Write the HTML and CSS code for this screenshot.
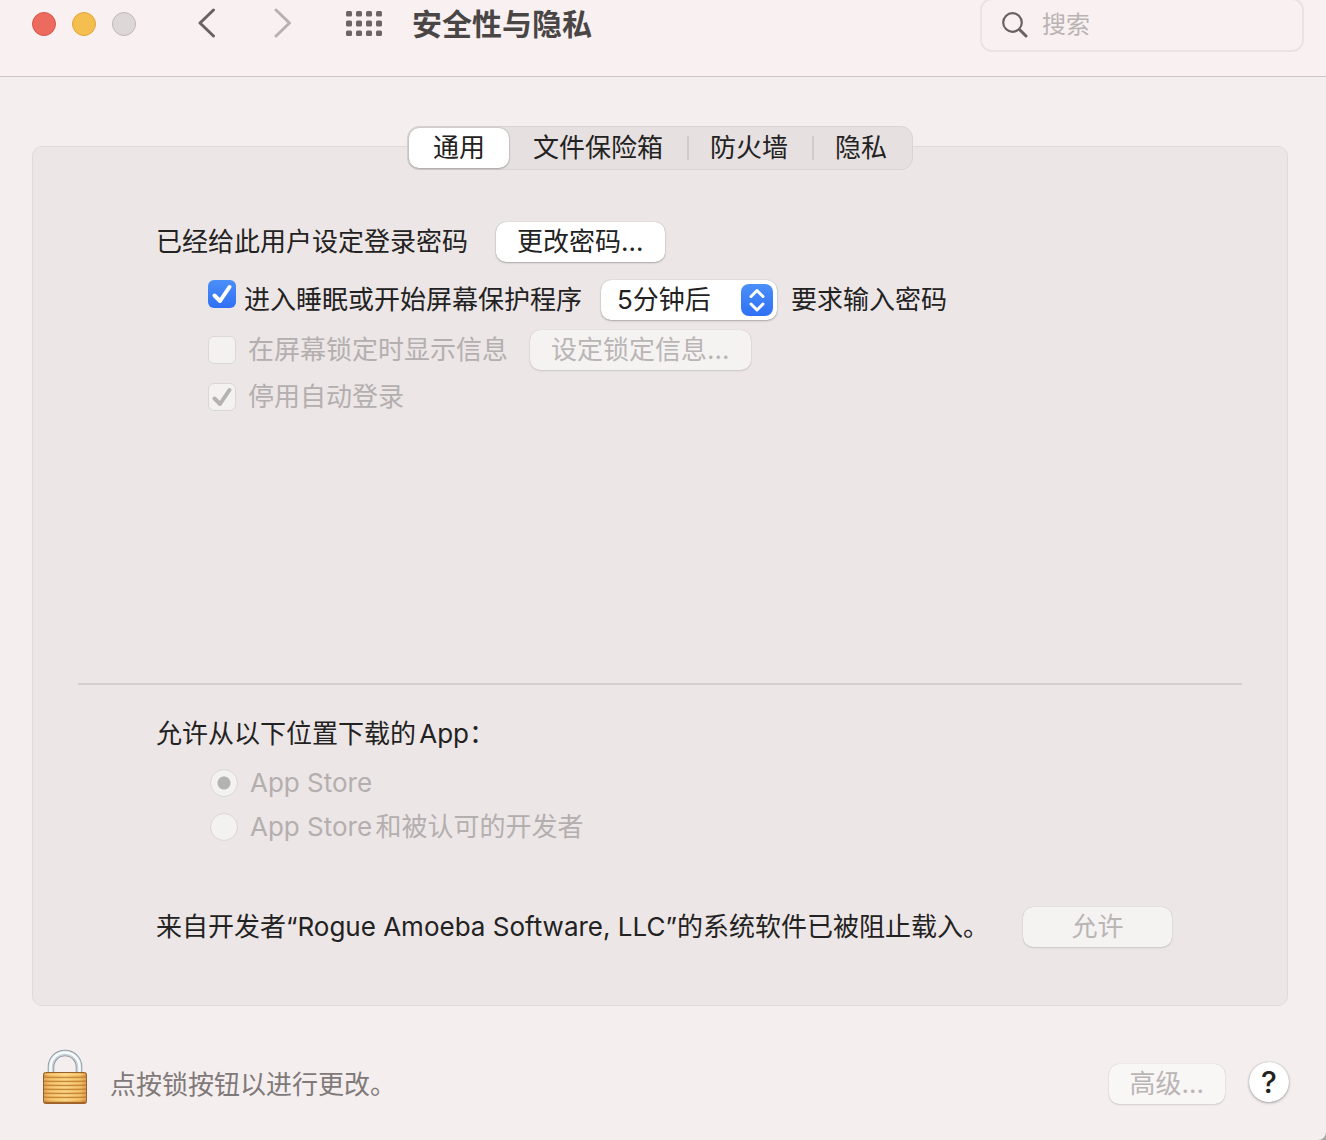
FILE: index.html
```html
<!DOCTYPE html>
<html lang="zh-CN">
<head>
  <meta charset="UTF-8" />
  <meta name="viewport" content="width=device-width, initial-scale=1.0"/>
  <title>安全性与隐私</title>
  <link rel="stylesheet" href="styles.css">
</head>
<body>
<div class="window">

  <header class="toolbar">
    <div class="lights">
      <button class="light light-close" type="button" aria-label="关闭"></button>
      <button class="light light-min" type="button" aria-label="最小化"></button>
      <button class="light light-off" type="button" aria-label="缩放" disabled></button>
    </div>
    <div class="history">
      <button class="icon-btn" type="button" aria-label="后退">
        <svg width="20" height="32" viewBox="0 0 20 32" fill="none" stroke="#686262" stroke-width="3" stroke-linecap="round" stroke-linejoin="round"><path d="M15.500 2 2 15l13.500 13"/></svg>
      </button>
      <button class="icon-btn" type="button" aria-label="前进" disabled>
        <svg width="20" height="32" viewBox="0 0 20 32" fill="none" stroke="#b9b1b1" stroke-width="3" stroke-linecap="round" stroke-linejoin="round"><path d="M4 2l13.500 13L4 28"/></svg>
      </button>
    </div>
    <button class="icon-btn show-all" type="button" aria-label="显示全部">
      <svg width="36" height="26" viewBox="0 0 36 26" fill="#6b6565">
        <rect x="0" y="0" width="6" height="5.500" rx="1.5"/><rect x="10" y="0" width="6" height="5.500" rx="1.5"/><rect x="20" y="0" width="6" height="5.500" rx="1.5"/><rect x="30" y="0" width="6" height="5.500" rx="1.5"/>
        <rect x="0" y="9.500" width="6" height="6" rx="1.5"/><rect x="10" y="9.500" width="6" height="6" rx="1.5"/><rect x="20" y="9.500" width="6" height="6" rx="1.5"/><rect x="30" y="9.500" width="6" height="6" rx="1.5"/>
        <rect x="0" y="19.500" width="6" height="5.500" rx="1.5"/><rect x="10" y="19.500" width="6" height="5.500" rx="1.5"/><rect x="20" y="19.500" width="6" height="5.500" rx="1.5"/><rect x="30" y="19.500" width="6" height="5.500" rx="1.5"/>
      </svg>
    </button>
    <h1 class="title">安全性与隐私</h1>
    <label class="search">
      <svg width="26" height="26" viewBox="0 0 26 26" fill="none" stroke="#686262" stroke-linecap="round"><circle cx="10.5" cy="10.5" r="9.3" stroke-width="2.2"/><path d="M17.5 17.5l6.5 6.5" stroke-width="3"/></svg>
      <input type="search" placeholder="搜索" aria-label="搜索">
    </label>
  </header>

  <main class="content">
    <nav class="tabs" role="tablist">
      <button class="tab active" type="button" role="tab" aria-selected="true">通用</button>
      <button class="tab" type="button" role="tab">文件保险箱</button>
      <button class="tab divided" type="button" role="tab">防火墙</button>
      <button class="tab divided" type="button" role="tab">隐私</button>
    </nav>

    <div class="panel">
      <section class="login">
        <div class="row password-row">
          <span>已经给此用户设定登录密码</span>
          <button class="btn" type="button">更改密码…</button>
        </div>
        <div class="row option delay-row">
          <input class="check" type="checkbox" id="require" checked>
          <label for="require">进入睡眠或开始屏幕保护程序</label>
          <div class="popup">
            <select id="delay" aria-label="要求输入密码的时间">
              <option>5分钟后</option>
            </select>
            <span class="popup-arrows">
              <svg width="32" height="32" viewBox="0 0 32 32" fill="none" stroke="#fff" stroke-width="3" stroke-linecap="round" stroke-linejoin="round"><path d="M10 12.5l6-6 6 6M10 20l6 6 6-6"/></svg>
            </span>
          </div>
          <label for="delay">要求输入密码</label>
        </div>
        <div class="row option message-row">
          <input class="check" type="checkbox" id="message" disabled>
          <label for="message">在屏幕锁定时显示信息</label>
          <button class="btn" type="button" disabled>设定锁定信息…</button>
        </div>
        <div class="row option">
          <input class="check" type="checkbox" id="autologin" checked disabled>
          <label for="autologin">停用自动登录</label>
        </div>
      </section>

      <section class="downloads">
        <h2>允许从以下位置下载的App：</h2>
        <div class="row source">
          <input class="radio" type="radio" name="source" id="store" checked disabled>
          <label for="store">App Store</label>
        </div>
        <div class="row source">
          <input class="radio" type="radio" name="source" id="developers" disabled>
          <label for="developers">App Store和被认可的开发者</label>
        </div>
        <div class="row blocked">
          <span>来自开发者“Rogue Amoeba Software, LLC”的系统软件已被阻止载入。</span>
          <button class="btn allow" type="button" disabled>允许</button>
        </div>
      </section>
    </div>
  </main>

  <footer class="footer">
    <button class="icon-btn lock" type="button" aria-label="锁">
      <svg width="46" height="56" viewBox="0 0 46 56">
        <defs>
          <linearGradient id="brass" x1="0" y1="0" x2="1" y2="0">
            <stop offset="0" stop-color="#d2903b"/><stop offset=".15" stop-color="#f0b95c"/><stop offset=".5" stop-color="#fbd480"/><stop offset=".85" stop-color="#efb657"/><stop offset="1" stop-color="#c98433"/>
          </linearGradient>
        </defs>
        <path d="M9 26V18a14 14 0 0 1 28 0V26" fill="none" stroke="#849097" stroke-width="6.500"/>
        <path d="M9 26V18a14 14 0 0 1 28 0V26" fill="none" stroke="#c9d2d8" stroke-width="5"/>
        <path d="M8.500 26V18a14.500 14.500 0 0 1 29 0V26" fill="none" stroke="#f7fafb" stroke-width="2.500"/>
        <rect x="1.500" y="23.500" width="43" height="31" rx="2" fill="url(#brass)" stroke="#98602a"/>
        <path d="M2 28.500h42M2 32.500h42M2 36.500h42M2 40.500h42M2 44.500h42M2 48.500h42" stroke="#c8863a" stroke-width="1.300"/>
        <path d="M3 25.500h40M2 30h42M2 34h42M2 38h42M2 42h42M2 46h42M2 50h42" stroke="#ffe09a" opacity=".6"/>
        <path d="M2 53.500h42" stroke="#a9682b" stroke-width="1.500"/>
      </svg>
    </button>
    <p class="lock-text">点按锁按钮以进行更改。</p>
    <button class="btn" type="button" disabled>高级…</button>
    <button class="help" type="button" aria-label="帮助">?</button>
  </footer>

</div>
</body>
</html>
```
FILE: styles.css
```css
* {
  box-sizing: border-box;
}

body {
  margin: 0;
  background: #aaa5a5;
  color: #232222;
  font-family: Inter, "Noto Sans CJK SC", sans-serif;
  font-size: 26px;
  line-height: 34px;
  text-autospace: normal;
}

button, input, select {
  font: inherit;
  color: inherit;
  text-autospace: normal;
  margin: 0;
}

.window {
  display: flex;
  flex-direction: column;
  min-height: 100vh;
  background: #f4eeee;
  border-bottom-right-radius: 8px;
}

/* toolbar */
.toolbar {
  display: flex;
  align-items: center;
  padding: 0 22px 28px 32px;
  background: #f9f1f1;
  border-bottom: 1px solid #cbc5c5;
}

.lights {
  display: flex;
  gap: 16px;
}

.light {
  width: 24px;
  height: 24px;
  padding: 0;
  border: 1px solid;
  border-radius: 50%;
}

.light-close {
  background: #ed6a5e;
  border-color: #d5584d;
}

.light-min {
  background: #f5bf4f;
  border-color: #dba63c;
}

.light-off {
  background: #ded7d8;
  border-color: #bfb8b8;
}

.icon-btn {
  display: flex;
  padding: 0;
  border: none;
  background: none;
}

.history {
  display: flex;
  gap: 54px;
  margin-left: 62px;
}

.show-all {
  margin-left: 54px;
}

.title {
  margin: 0 auto 0 30px;
  font-size: 30px;
  line-height: 36px;
  font-weight: 700;
  color: #4a4646;
}

.search {
  display: flex;
  align-items: center;
  gap: 14px;
  flex: 0 1 324px;
  min-width: 0;
  height: 54px;
  margin: -2px 0 -4px;
  padding: 0 20px;
  border: 2px solid #ebe3e3;
  border-radius: 12px;
}

.search svg {
  flex: none;
}

.search input {
  flex: 1;
  min-width: 0;
  padding: 0;
  border: none;
  outline: none;
  background: none;
  font-size: 24px;
}

.search input::placeholder {
  color: #bab3b3;
}

/* tabs sit across the top edge of the panel */
.content {
  display: flex;
  flex-direction: column;
  flex: 1;
  padding: 49px 38px 0 32px;
}

.tabs {
  display: flex;
  align-self: center;
  z-index: 1;
  height: 44px;
  margin-bottom: -24px;
  padding: 1px;
  background: #e6e0e0;
  border: 1px solid #dad4d4;
  border-radius: 12px;
}

.tab {
  display: flex;
  align-items: center;
  padding: 0 24px;
  border: none;
  border-radius: 10px;
  background: none;
}

.tab.active {
  background: #fff;
  box-shadow: 0 0 2px rgba(0, 0, 0, 0.3), 0 1px 2px rgba(0, 0, 0, 0.2);
}

.tab.divided::before {
  content: "";
  width: 2px;
  height: 24px;
  margin: 0 21px 0 -24px;
  background: #d1cbcb;
}

.panel {
  display: flex;
  flex-direction: column;
  flex: 1;
  padding: 75px 45px 58px;
  background: #ece6e6;
  border: 1px solid #e0dada;
  border-radius: 10px;
}

.row {
  display: flex;
  align-items: center;
}

.btn {
  height: 40px;
  padding: 0 21px;
  border: none;
  border-radius: 10px;
  background: #fff;
  box-shadow: 0 0 1px rgba(0, 0, 0, 0.3), 0 1px 2px rgba(0, 0, 0, 0.25);
}

.btn:disabled {
  background: #f5f2f2;
  color: #b9b5b5;
  box-shadow: 0 0 1px rgba(0, 0, 0, 0.2), 0 1px 2px rgba(0, 0, 0, 0.12);
}

/* login options */
.login {
  flex: 1;
  padding: 0 78px;
}

.password-row {
  gap: 28px;
}

.option {
  gap: 12px;
  margin: 10px 0 0 52px;
}

.delay-row {
  gap: 8px;
  margin-top: 18px;
}

.delay-row .check {
  align-self: flex-start;
}

.check, .radio {
  appearance: none;
  flex: none;
  width: 28px;
  height: 28px;
  background: #f4f1f1 center / 28px no-repeat;
  border: 1px solid #dcd6d6;
  background-origin: border-box;
}

.check {
  border-radius: 6px;
}

.check:checked {
  border: none;
  background-color: #3a7bf6;
  background-image: url("data:image/svg+xml,%3Csvg xmlns='http://www.w3.org/2000/svg' viewBox='0 0 28 28' fill='none' stroke='white' stroke-width='4' stroke-linecap='round' stroke-linejoin='round'%3E%3Cpath d='M6.500 15.500l5.500 5.500L21.500 7'/%3E%3C/svg%3E"), linear-gradient(#4b8ff8, #3070f5);
}

.check:disabled:checked {
  border: 1px solid #dcd6d6;
  background-color: #f4f1f1;
  background-image: url("data:image/svg+xml,%3Csvg xmlns='http://www.w3.org/2000/svg' viewBox='0 0 28 28' fill='none' stroke='%23b5b2b2' stroke-width='4' stroke-linecap='round' stroke-linejoin='round'%3E%3Cpath d='M6.500 15.500l5.500 5.500L21.500 7'/%3E%3C/svg%3E");
}

.radio {
  border-radius: 50%;
}

.radio:checked {
  background-image: radial-gradient(circle, #b5b2b2 6px, transparent 7px);
}

input:disabled + label {
  color: #b4afaf;
}

.popup {
  position: relative;
  margin: 0 6px 0 11px;
}

.popup select {
  display: block;
  appearance: none;
  width: 176px;
  height: 40px;
  padding: 0 40px 0 16px;
  border: none;
  border-radius: 10px;
  background: #fff;
  box-shadow: 0 0 1px rgba(0, 0, 0, 0.3), 0 1px 2px rgba(0, 0, 0, 0.25);
}

.popup-arrows {
  position: absolute;
  top: 4px;
  right: 4px;
  display: flex;
  border-radius: 8px;
  background: linear-gradient(#4b8ff8, #3070f5);
  pointer-events: none;
}

.message-row .btn {
  margin-left: 10px;
}

/* downloads */
.downloads {
  padding: 32px 0 0 78px;
  border-top: 2px solid #d5cfcf;
}

.downloads h2 {
  margin: 0 0 15px;
  font-size: 26px;
  line-height: 34px;
  font-weight: 400;
}

.source {
  gap: 12px;
  margin: 0 0 10px 54px;
}

.blocked {
  margin-top: 63px;
  gap: 34px;
}

.allow {
  width: 149px;
}

/* footer */
.footer {
  display: flex;
  align-items: center;
  padding: 43px 37px 35px 42px;
}

.lock-text {
  margin: 15px auto 0 22px;
  color: #7f7979;
}

.footer .btn {
  margin-top: 14px;
  background: #f9f6f6;
}

.help {
  width: 40px;
  height: 40px;
  margin: 10px 0 0 24px;
  padding: 0;
  border: none;
  border-radius: 50%;
  background: #fff;
  font-size: 30px;
  font-weight: 500;
  box-shadow: 0 0 1px rgba(0, 0, 0, 0.3), 0 1px 3px rgba(0, 0, 0, 0.3);
}
```
